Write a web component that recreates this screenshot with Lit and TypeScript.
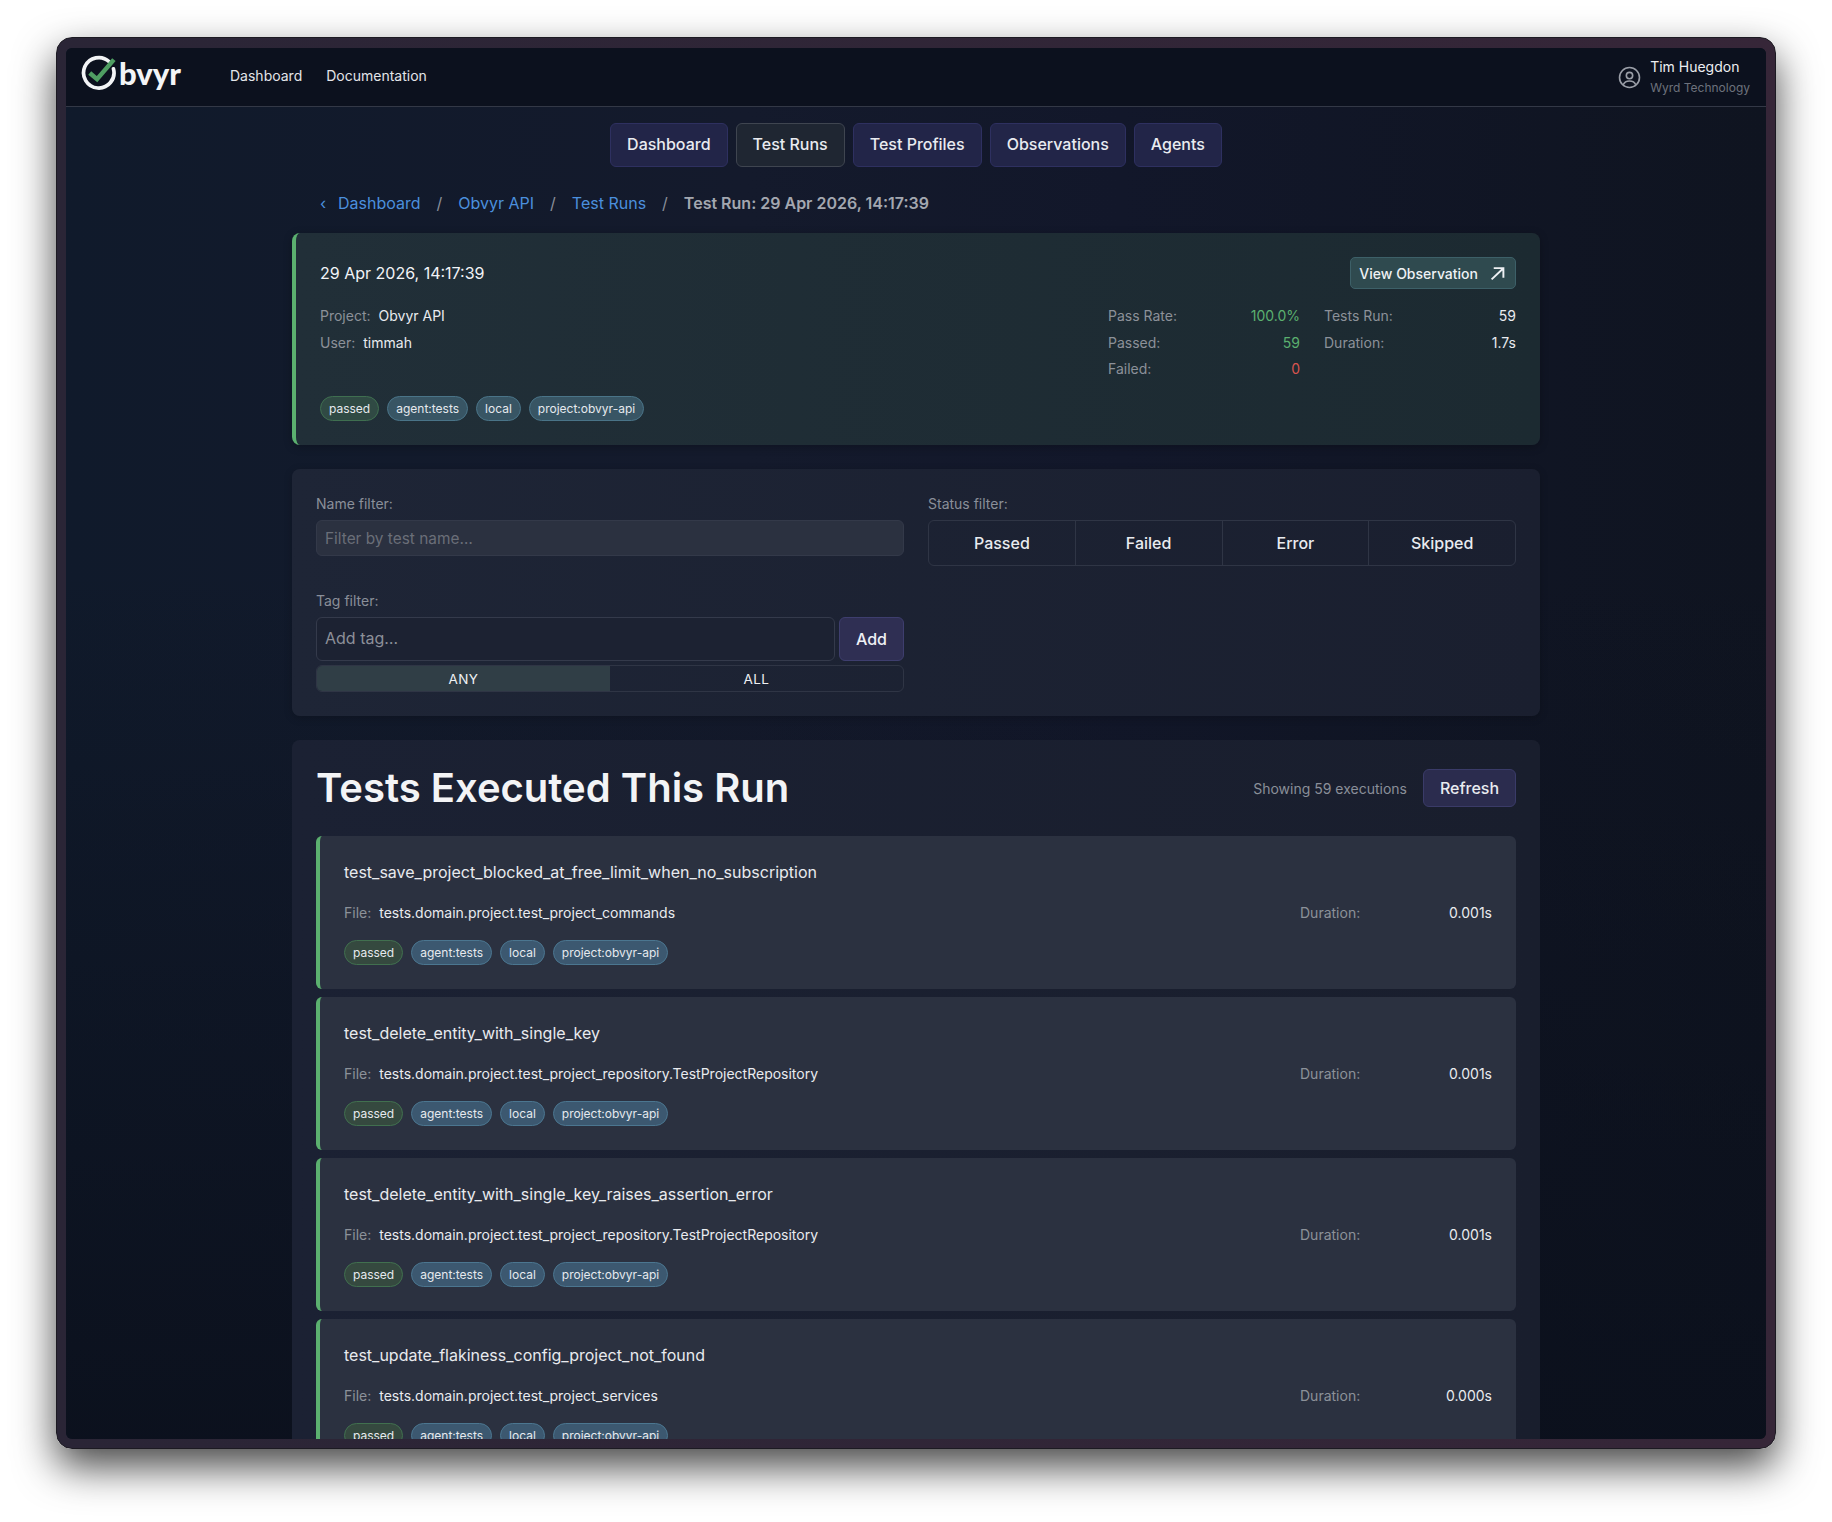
import { LitElement, html, css } from "lit";
import { customElement } from "lit/decorators.js";

const TESTS = [
  { name: "test_save_project_blocked_at_free_limit_when_no_subscription", file: "tests.domain.project.test_project_commands", dur: "0.001s" },
  { name: "test_delete_entity_with_single_key", file: "tests.domain.project.test_project_repository.TestProjectRepository", dur: "0.001s" },
  { name: "test_delete_entity_with_single_key_raises_assertion_error", file: "tests.domain.project.test_project_repository.TestProjectRepository", dur: "0.001s" },
  { name: "test_update_flakiness_config_project_not_found", file: "tests.domain.project.test_project_services", dur: "0.000s" },
];
const TAGS = ["agent:tests", "local", "project:obvyr-api"];

@customElement("app-root")
export class AppRoot extends LitElement {
  static styles = css`
    :host { display: block; width: 1832px; height: 1522px; background: #fff; overflow: hidden; font-family: Inter, "Liberation Sans", sans-serif; color: #f1f3f6; }
    * { box-sizing: border-box; }
    .frame { margin: 37px 56px 0; width: 1720px; height: 1412px; padding: 10px 9px 9px; border: 1px solid #1c1a22; border-radius: 16px; background: linear-gradient(90deg, #2a2536, #362638); box-shadow: 0 18px 40px rgba(0,0,0,.72); }
    .app { height: 100%; border-radius: 6px; overflow: hidden; background: linear-gradient(90deg, #101a2b 0%, #141a2c 40%, #12172a 62%, #0f1420 100%); position: relative; }
    .shade { background: linear-gradient(180deg, transparent 0%, transparent 35%, #0b101c 100%); }
    .top { height: 59px; display: flex; align-items: center; padding: 0 16px; background: #0c111e; border-bottom: 1px solid #333846; }
    .logo { display: flex; align-items: center; width: 148px; height: 47px; padding-bottom: 7px; margin-left: -1px; margin-right: 1px; }
    .logo svg { display: block; flex: none; margin-right: 1px; }
    .logo span { font-family: Lato, Inter, sans-serif; font-weight: 900; font-size: 31px; line-height: 40px; color: #f3f4f6; margin-top: -1px; }
    .menu { display: flex; gap: 24px; font-size: 14px; color: #e3e5e9; padding-bottom: 3px; }
    .user { margin-left: auto; display: flex; align-items: center; gap: 9px; }
    .user svg { display: block; }
    .uname { font-size: 14px; line-height: 20px; color: #eceef1; }
    .uorg { font-size: 12px; line-height: 20px; color: #6d717c; margin-top: 1px; }
    .main { width: 1248px; margin: 0 auto; }
    .tabs { display: flex; justify-content: center; gap: 8px; padding-top: 16px; }
    .tab { height: 44px; padding: 0 16px 2px; display: flex; align-items: center; border-radius: 6px; font-size: 16px; font-weight: 500; background: #222548; border: 1px solid #2e3060; color: #e9ebf0; }
    .tab.on { background: #1f2632; border-color: #3f4550; }
    .crumbs { display: flex; align-items: center; height: 24px; margin-top: 24px; padding-left: 28px; font-size: 16px; color: #4b8fdd; }
    .crumbs .chev { width: 18px; font-size: 16px; }
    .crumbs .sep { color: #8a8f9a; margin: 0 16px; }
    .crumbs b { font-weight: 600; color: #a3a7b0; }
    .card { border-radius: 8px; }
    .status { margin-top: 18px; height: 212px; background: linear-gradient(90deg, #212f38, #1c2a31); border-left: 4px solid #5bb06f; padding: 24px 24px 0; box-shadow: 0 2px 8px rgba(0,0,0,.25); display: flex; flex-direction: column; }
    .status .head { display: flex; justify-content: space-between; align-items: flex-start; height: 32px; }
    .when { font-size: 16px; line-height: 32px; color: #f2f4f7; }
    .vo { height: 32px; padding: 0 10px 0 8px; display: flex; align-items: center; gap: 12px; border-radius: 5px; font-size: 14px; font-weight: 500; background: #2f4a4f; border: 1px solid #3d6068; color: #eef1f4; }
    .vo svg { display: block; }
    .status .body { display: flex; justify-content: space-between; margin-top: 14px; height: 80px; }
    .kv { font-size: 14px; line-height: 26.6px; }
    .k { color: #8c9199; }
    .v { color: #e9ebef; }
    .kv .k { margin-right: 8px; }
    .stats { display: flex; gap: 24px; }
    .col { width: 192px; }
    .row { display: flex; justify-content: space-between; font-size: 14px; line-height: 26.6px; }
    .g { color: #5bb06f; }
    .r { color: #d8544f; }
    .tags { display: flex; gap: 8px; }
    .status .tags { margin-top: 13px; }
    .tag { height: 25px; padding: 0 8px; display: flex; align-items: center; border-radius: 13px; font-size: 12px; color: #e6e9ee; background: #385564; border: 1px solid #4a7488; }
    .tag.p { background: #304a44; border-color: #3f6f50; }
    .filters { margin-top: 24px; height: 247px; padding: 24px; background: linear-gradient(90deg, #1e2536, #1a1f2f); display: grid; grid-template-columns: 588px 588px; column-gap: 24px; align-items: start; box-shadow: 0 2px 8px rgba(0,0,0,.2); }
    .lab { font-size: 14px; line-height: 22px; color: #8a8f99; margin-bottom: 5px; }
    .inp { display: flex; align-items: center; padding: 0 8px; border-radius: 6px; font-size: 16px; }
    .name { height: 36px; background: #2b3140; border: 1px solid #333949; color: #6a6e78; font-size: 15.4px; }
    .tagf { margin-top: 34px; }
    .addrow { display: flex; gap: 4px; }
    .addi { flex: 1; height: 44px; padding-bottom: 2px; background: #1c2232; border: 1px solid #343a4b; color: #8c9099; }
    .add { width: 65px; height: 44px; display: flex; align-items: center; justify-content: center; border-radius: 6px; font-size: 16px; font-weight: 500; background: #2f2f53; border: 1px solid #3e3e6e; color: #eef0f5; }
    .toggle { margin-top: 4px; height: 27px; display: flex; border: 1px solid #2f3545; border-radius: 6px; overflow: hidden; font-size: 13.5px; letter-spacing: .4px; color: #eef0f3; }
    .toggle div { flex: 1; display: flex; align-items: center; justify-content: center; }
    .toggle .on { background: #303e46; }
    .seg { height: 46px; display: flex; border: 1px solid #2f3545; border-radius: 6px; }
    .seg div { flex: 1; display: flex; align-items: center; justify-content: center; font-size: 16px; font-weight: 500; color: #e9ebef; }
    .seg div + div { border-left: 1px solid #2f3545; }
    .tests { margin-top: 24px; height: 800px; padding: 24px; background: linear-gradient(90deg, #1b2133, #191e2d); }
    .th { display: flex; align-items: center; height: 48px; margin-bottom: 24px; }
    .th h1 { margin: 0; font-size: 40px; line-height: 48px; font-weight: 600; color: #f3f4f6; }
    .show { margin-left: auto; font-size: 14px; color: #8a8f99; margin-right: 16px; }
    .refresh { width: 93px; height: 38px; display: flex; align-items: center; justify-content: center; border-radius: 6px; font-size: 16px; font-weight: 500; background: #2b2c4e; border: 1px solid #3a3b68; color: #e9ebf0; }
    .list { display: flex; flex-direction: column; gap: 8px; }
    .t { height: 153px; background: #2b3140; border-left: 4px solid #5bb06f; padding: 24px; border-radius: 6px; }
    .tn { font-size: 16px; line-height: 24px; color: #e8eaee; }
    .tr { display: flex; justify-content: space-between; align-items: center; margin-top: 16px; font-size: 14px; line-height: 24px; }
    .d { width: 192px; display: flex; justify-content: space-between; }
    .t .tags { margin-top: 13px; }
    .t .tag { background: #3c5870; border-color: #4b7690; }
    .t .tag.p { background: #35493f; border-color: #41704f; }
  `;

  tags() {
    return html`<div class="tags"><span class="tag p">passed</span>${TAGS.map((t) => html`<span class="tag">${t}</span>`)}</div>`;
  }

  render() {
    return html`
      <div class="frame">
        <div class="app"><div class="shade">
          <div class="top">
            <div class="logo">
              <svg width="37" height="37" viewBox="0 0 36 36" fill="none">
                <path d="M27.5 6.6A14.8 14.8 0 1 0 31.6 13.5" stroke="#f3f4f6" stroke-width="3.6" stroke-linecap="round"/>
                <path d="M8.5 17.5L15.6 23.5L32 4.5" stroke="#4f9e62" stroke-width="4.4"/>
              </svg>
              <span>bvyr</span>
            </div>
            <nav class="menu"><span>Dashboard</span><span>Documentation</span></nav>
            <div class="user">
              <svg width="23" height="23" viewBox="0 0 24 24" fill="none" stroke="#9a9ea7" stroke-width="1.7">
                <circle cx="12" cy="12" r="10.4"/>
                <circle cx="12" cy="10" r="3.3"/>
                <path d="M5.4 19.6C6.6 16.8 9 15.6 12 15.6s5.4 1.2 6.6 4"/>
              </svg>
              <div><div class="uname">Tim Huegdon</div><div class="uorg">Wyrd Technology</div></div>
            </div>
          </div>
          <div class="main">
            <div class="tabs">
              <div class="tab">Dashboard</div><div class="tab on">Test Runs</div><div class="tab">Test Profiles</div><div class="tab">Observations</div><div class="tab">Agents</div>
            </div>
            <div class="crumbs">
              <span class="chev">‹</span><span>Dashboard</span><span class="sep">/</span><span>Obvyr API</span><span class="sep">/</span><span>Test Runs</span><span class="sep">/</span><b>Test Run: 29 Apr 2026, 14:17:39</b>
            </div>
            <section class="card status">
              <div class="head">
                <div class="when">29 Apr 2026, 14:17:39</div>
                <div class="vo">View Observation
                  <svg width="15" height="15" viewBox="0 0 14 14" fill="none" stroke="#eef1f4" stroke-width="1.8"><path d="M1.5 12.5L12 2.5M3.5 2h9v9"/></svg>
                </div>
              </div>
              <div class="body">
                <div>
                  <div class="kv"><span class="k">Project:</span><span class="v">Obvyr API</span></div>
                  <div class="kv"><span class="k">User:</span><span class="v">timmah</span></div>
                </div>
                <div class="stats">
                  <div class="col">
                    <div class="row"><span class="k">Pass Rate:</span><span class="g">100.0%</span></div>
                    <div class="row"><span class="k">Passed:</span><span class="g">59</span></div>
                    <div class="row"><span class="k">Failed:</span><span class="r">0</span></div>
                  </div>
                  <div class="col">
                    <div class="row"><span class="k">Tests Run:</span><span class="v">59</span></div>
                    <div class="row"><span class="k">Duration:</span><span class="v">1.7s</span></div>
                  </div>
                </div>
              </div>
              ${this.tags()}
            </section>
            <section class="card filters">
              <div>
                <div class="lab">Name filter:</div>
                <div class="inp name">Filter by test name…</div>
                <div class="tagf">
                  <div class="lab">Tag filter:</div>
                  <div class="addrow"><div class="inp addi">Add tag…</div><div class="add">Add</div></div>
                  <div class="toggle"><div class="on">ANY</div><div>ALL</div></div>
                </div>
              </div>
              <div>
                <div class="lab">Status filter:</div>
                <div class="seg"><div>Passed</div><div>Failed</div><div>Error</div><div>Skipped</div></div>
              </div>
            </section>
            <section class="card tests">
              <div class="th"><h1>Tests Executed This Run</h1><span class="show">Showing 59 executions</span><div class="refresh">Refresh</div></div>
              <div class="list">
                ${TESTS.map((t) => html`
                  <article class="t">
                    <div class="tn">${t.name}</div>
                    <div class="tr">
                      <div class="kv"><span class="k">File:</span><span class="v">${t.file}</span></div>
                      <div class="d"><span class="k">Duration:</span><span class="v">${t.dur}</span></div>
                    </div>
                    ${this.tags()}
                  </article>`)}
              </div>
            </section>
          </div>
        </div></div>
      </div>
    `;
  }
}
